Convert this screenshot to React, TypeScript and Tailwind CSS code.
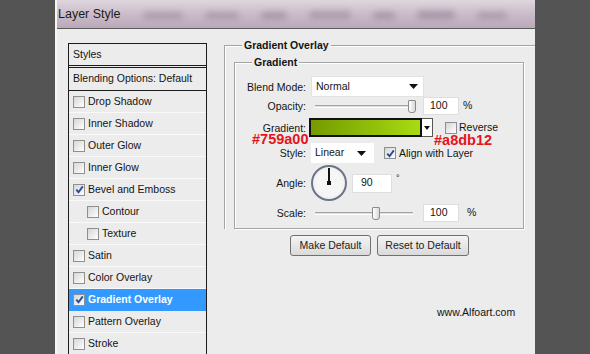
import React from "react";

const Tri = () => (
  <svg width="9" height="5" viewBox="0 0 9 5">
    <path d="M0 0 L9 0 L4.5 5 Z" fill="#111" />
  </svg>
);

const Check = ({ checked = false }: { checked?: boolean }) => (
  <span className="w-[12px] h-[12px] border border-[#8e8f8f] bg-[linear-gradient(135deg,#d6d6d6,#ffffff)] flex items-center justify-center shrink-0">
    {checked && (
      <svg width="9" height="9" viewBox="0 0 9 9">
        <path d="M1.3 4.6 L3.5 7.2 L7.8 1.4" stroke="#2b4a9a" strokeWidth="1.9" fill="none" />
      </svg>
    )}
  </span>
);

const Slider = ({ pos }: { pos: number }) => (
  <div className="relative w-[106px] h-[18px] flex items-center px-[4px]">
    <div className="w-full h-[3px] border-t border-[#a3a3a3] border-b border-b-white bg-[#dedede]" />
    <span
      className="absolute top-[3px] w-[8px] h-[13px] rounded-b-[3px] rounded-t-[1px] border border-[#8a8a8a] bg-[linear-gradient(90deg,#ffffff,#d8d8d8)]"
      style={{ left: pos }}
    />
  </div>
);

const Label = ({ children }: { children: React.ReactNode }) => (
  <div className="w-[72px] text-right pr-[1px] shrink-0 leading-[12px]">{children}</div>
);

const items: { name: string; checked?: boolean; sub?: boolean; active?: boolean }[] = [
  { name: "Drop Shadow" },
  { name: "Inner Shadow" },
  { name: "Outer Glow" },
  { name: "Inner Glow" },
  { name: "Bevel and Emboss", checked: true },
  { name: "Contour", sub: true },
  { name: "Texture", sub: true },
  { name: "Satin" },
  { name: "Color Overlay" },
  { name: "Gradient Overlay", checked: true, active: true },
  { name: "Pattern Overlay" },
  { name: "Stroke" },
];

export default function App() {
  return (
    <div
      className="w-[590px] h-[354px] bg-[#545454] flex overflow-hidden text-[10.5px] text-[#141414]"
      style={{ fontFamily: '"Liberation Sans", Arial, sans-serif' }}
    >
      <div className="ml-[55px] w-[480px] h-[354px] shrink-0 bg-[#ececec] flex flex-col relative overflow-hidden border-l-2 border-[#f6f6f6]">
        {/* Title bar */}
        <div className="h-[29px] shrink-0 border-b border-[#5a5a5a] bg-[linear-gradient(180deg,#ded6dd_0%,#c9bac8_55%,#b9a9b9_100%)] flex items-center relative overflow-hidden">
          <span className="pl-[1px] text-[12.5px] text-[#1b1b1b]">Layer Style</span>
          <div className="flex items-center gap-[22px] ml-[22px] mt-[2px]">
            <span className="w-[40px] h-[7px] rounded-full bg-[#8f7d8f] opacity-50 blur-[3px]" />
            <span className="w-[34px] h-[7px] rounded-full bg-[#8f7d8f] opacity-50 blur-[3px]" />
            <span className="w-[26px] h-[7px] rounded-full bg-[#8f7d8f] opacity-60 blur-[3px]" />
            <span className="w-[42px] h-[8px] rounded-full bg-[#8f7d8f] opacity-50 blur-[3px]" />
            <span className="w-[22px] h-[7px] rounded-full bg-[#8f7d8f] opacity-60 blur-[3px]" />
            <span className="w-[38px] h-[8px] rounded-full bg-[#8f7d8f] opacity-60 blur-[3px]" />
            <span className="w-[30px] h-[7px] rounded-full bg-[#8f7d8f] opacity-50 blur-[3px]" />
          </div>
        </div>

        {/* Body */}
        <div className="flex pt-[14px] pl-[11px]">
          {/* Left styles panel */}
          <div className="w-[139px] h-[320px] shrink-0 border border-[#1c1c1c] flex flex-col">
            <div className="h-[21px] flex items-center pl-[4px] border-b-[3px] border-double border-[#1c1c1c] box-content">
              Styles
            </div>
            <div className="h-[22px] flex items-center pl-[4px] border-b border-[#1c1c1c] box-content">
              Blending Options: Default
            </div>
            {items.map((it) => (
              <div
                key={it.name}
                className={
                  "h-[22px] shrink-0 flex items-center gap-[3px] border-b " +
                  (it.active
                    ? "bg-[#3399ff] text-white font-bold border-[#3399ff] pl-[4px]"
                    : it.sub
                    ? "border-[#f9f9f9] pl-[18px]"
                    : "border-[#f9f9f9] pl-[4px]")
                }
              >
                <Check checked={it.checked} />
                <span>{it.name}</span>
              </div>
            ))}
          </div>

          {/* Right column */}
          <div className="ml-[17px] mt-[2px] flex flex-col">
            <div className="relative w-[320px] border-t border-l border-[#a4a4a4] shadow-[inset_1px_1px_0_#fff] pt-[16px] pl-[9px]">
              <span className="absolute left-[17px] -top-[7px] px-[2px] bg-[#ececec] font-bold leading-[13px]">
                Gradient Overlay
              </span>
              <div className="relative w-[290px] h-[167px] border border-[#a4a4a4] shadow-[1px_1px_0_#fff,inset_1px_1px_0_#fff] flex flex-col">
                <span className="absolute left-[17px] -top-[7px] px-[2px] bg-[#ececec] font-bold leading-[13px]">
                  Gradient
                </span>

                {/* Blend mode */}
                <div className="flex items-center mt-[13px] h-[21px]">
                  <Label>Blend Mode:</Label>
                  <div className="ml-[4px] w-[113px] h-[21px] bg-white border border-[#e2e2e2] flex items-center justify-between pl-[4px] pr-[5px]">
                    <span>Normal</span>
                    <Tri />
                  </div>
                </div>

                {/* Opacity */}
                <div className="flex items-center h-[18px]">
                  <Label>Opacity:</Label>
                  <div className="ml-[4px]">
                    <Slider pos={97} />
                  </div>
                  <div className="ml-[6px] w-[36px] h-[18px] bg-white border border-[#dedede] flex items-center pl-[6px]">
                    100
                  </div>
                  <span className="ml-[4px]">%</span>
                </div>

                {/* Gradient */}
                <div className="flex items-center mt-[3px] h-[19px]">
                  <Label>Gradient:</Label>
                  <div className="ml-[2px] w-[113px] h-[19px] border-2 border-[#101010] bg-[linear-gradient(90deg,#759a00,#a8db12)]" />
                  <div className="w-[11px] h-[19px] bg-white border border-[#555] border-l-0 flex items-center justify-center">
                    <svg width="6" height="4" viewBox="0 0 6 4">
                      <path d="M0 0 L6 0 L3 4 Z" fill="#111" />
                    </svg>
                  </div>
                  <div className="ml-[12px] flex items-center gap-[2px]">
                    <Check />
                    <span>Reverse</span>
                  </div>
                </div>

                {/* Style */}
                <div className="flex items-center mt-[6px] h-[20px]">
                  <Label>Style:</Label>
                  <div className="ml-[4px] w-[63px] h-[20px] bg-white flex items-center justify-between pl-[4px] pr-[8px]">
                    <span>Linear</span>
                    <Tri />
                  </div>
                  <div className="ml-[10px] flex items-center gap-[3px] leading-[12px]">
                    <Check checked />
                    <span>Align with Layer</span>
                  </div>
                </div>

                {/* Angle */}
                <div className="flex items-center mt-[2px] h-[36px]">
                  <Label>Angle:</Label>
                  <div className="ml-[4px] w-[36px] h-[36px] rounded-full border-2 border-[#6c7487] bg-[radial-gradient(circle,#f6f6f6_55%,#e2e2e2_100%)] flex justify-center relative">
                    <span className="mt-[1px] w-[2px] h-[16px] bg-[#111]" />
                    <span className="absolute left-[14px] top-[14px] w-[4px] h-[4px] bg-[#111]" />
                  </div>
                  <div className="ml-[5px] w-[40px] h-[19px] bg-white border border-[#dedede] flex items-center pl-[8px]">
                    90
                  </div>
                  <span className="ml-[4px] self-start mt-[7px] text-[9px]">°</span>
                </div>

                {/* Scale */}
                <div className="flex items-center mt-[3px] h-[18px]">
                  <Label>Scale:</Label>
                  <div className="ml-[4px]">
                    <Slider pos={61} />
                  </div>
                  <div className="ml-[6px] w-[36px] h-[18px] bg-white border border-[#dedede] flex items-center pl-[6px]">
                    100
                  </div>
                  <span className="ml-[8px]">%</span>
                </div>

                {/* Annotations */}
                <span className="absolute left-[17px] top-[71px] text-[14.5px] leading-[11px] font-bold text-[#e3141c]">
                  #759a00
                </span>
                <span className="absolute left-[199px] top-[72px] text-[14.5px] leading-[11px] font-bold text-[#e3141c]">
                  #a8db12
                </span>
              </div>
            </div>

            {/* Buttons */}
            <div className="flex gap-[6px] mt-[6px] ml-[66px]">
              <button className="w-[81px] h-[21px] rounded-[3px] border border-[#707070] bg-[linear-gradient(180deg,#f4f4f4,#dadada)] text-[10.5px] text-[#222]">
                Make Default
              </button>
              <button className="w-[92px] h-[21px] rounded-[3px] border border-[#707070] bg-[linear-gradient(180deg,#f4f4f4,#dadada)] text-[10.5px] text-[#222]">
                Reset to Default
              </button>
            </div>
          </div>
        </div>

        <span className="absolute left-[380px] top-[305px] text-[10.5px] text-[#111]">www.Alfoart.com</span>
      </div>
    </div>
  );
}
